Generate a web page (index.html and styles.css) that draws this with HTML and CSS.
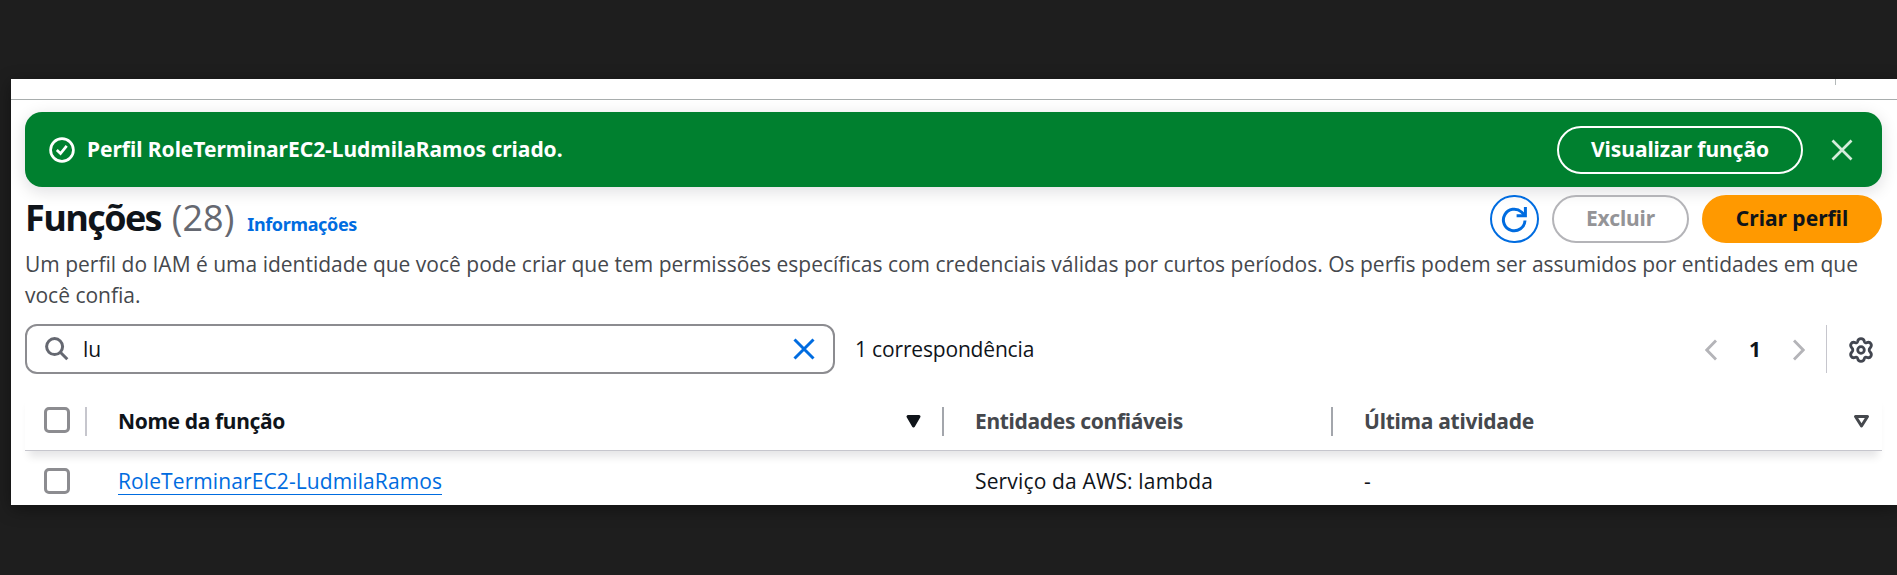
FILE: index.html
```
<!DOCTYPE html>
<html lang="pt-BR">
<head>
<meta charset="utf-8">
<title>Funções | IAM</title>
<link rel="stylesheet" href="styles.css">
</head>
<body>
<main class="panel">
  <div class="topbar"><span class="topbar-tick"></span></div>

  <section class="flash">
    <svg class="flash-icon" viewBox="0 0 26 26"><circle cx="13" cy="13" r="11.4"/><path d="M7.8 13l3.700 3.500 6.200-7.700"/></svg>
    <p class="flash-text">Perfil RoleTerminarEC2-LudmilaRamos criado.</p>
    <button class="btn btn-flash">Visualizar função</button>
    <svg class="flash-close" viewBox="0 0 22 22"><path d="M1.5 1.5l19 19M20.5 1.5l-19 19"/></svg>
  </section>

  <header class="header">
    <h1 class="title">Funções</h1>
    <span class="count">(28)</span>
    <a class="info">Informações</a>
    <div class="actions">
      <button class="btn btn-refresh"><svg viewBox="0 0 27 27"><path d="M24 14.500A10.800 10.800 0 1 1 20.500 6L23.500 9"/><path d="M24.400 1v8.800h-8.800"/></svg></button>
      <button class="btn btn-disabled">Excluir</button>
      <button class="btn btn-primary">Criar perfil</button>
    </div>
  </header>

  <p class="description">Um perfil do IAM é uma identidade que você pode criar que tem permissões específicas com credenciais válidas por curtos períodos. Os perfis podem ser assumidos por entidades em que<br>você confia.</p>

  <div class="tools">
    <div class="search">
      <svg class="search-icon" viewBox="0 0 24 24"><circle cx="9.600" cy="9.600" r="8"/><path d="M15.300 15.300l7 7"/></svg>
      <span class="search-value">lu</span>
      <svg class="search-clear" viewBox="0 0 22 22"><path d="M1.5 1.5l19 19M20.5 1.5l-19 19"/></svg>
    </div>
    <span class="matches">1 correspondência</span>
    <div class="pager">
      <svg class="chevron" viewBox="0 0 12 22"><path d="M11 1.5L1.800 11l9.200 9.500"/></svg>
      <span class="page">1</span>
      <svg class="chevron" viewBox="0 0 12 22"><path d="M1 1.5l9.200 9.500L1 20.500"/></svg>
    </div>
    <div class="settings">
      <svg class="gear" viewBox="0 0 26 26"><path d="M9.600 4.600C10 2.600 11.200 1.700 13 1.700S16 2.600 16.400 4.600C16.700 5.800 17.600 6 18.700 5.600C20.500 4.900 22 5.200 22.900 6.800S23.400 9.800 22 11.100C20.900 12.100 20.900 13.900 22 14.900C23.400 16.200 23.800 17.600 22.900 19.200S20.500 21.100 18.700 20.400C17.600 20 16.700 20.200 16.400 21.400C16 23.400 14.800 24.300 13 24.300S10 23.400 9.600 21.400C9.300 20.200 8.400 20 7.300 20.400C5.500 21.100 4 20.800 3.100 19.200S2.600 16.200 4 14.900C5.100 13.900 5.100 12.100 4 11.100C2.600 9.800 2.200 8.400 3.100 6.800S5.500 4.900 7.300 5.600C8.400 6 9.300 5.800 9.600 4.600Z"/><circle cx="13" cy="13" r="3.300"/></svg>
    </div>
  </div>

  <div class="row row-head">
    <div class="cell-check"><span class="checkbox"></span></div>
    <div class="cell cell-sorted">Nome da função<svg class="sort sort-active" viewBox="0 0 17 15"><path d="M3 2.500h11L8.500 12Z"/></svg></div>
    <div class="cell cell-entities">Entidades confiáveis</div>
    <div class="cell cell-activity">Última atividade<svg class="sort" viewBox="0 0 17 15"><path d="M2.500 2.500h12L8.500 12Z"/></svg></div>
  </div>
  <div class="row row-body">
    <div class="cell-check"><span class="checkbox"></span></div>
    <div class="cell"><a class="role-link">RoleTerminarEC2-LudmilaRamos</a></div>
    <div class="cell cell-service">Serviço da AWS: lambda</div>
    <div class="cell">-</div>
  </div>
</main>
</body>
</html>
```
FILE: styles.css
```
* { box-sizing: border-box; }
body {
  margin: 0;
  height: 575px;
  padding: 79px 0 0 11px;
  overflow: hidden;
  background: #1e1e1e;
  font: 400 21px/31px "Open Sans", "Noto Sans", sans-serif;
  color: #0f141a;
}
p, h1 { margin: 0; }
svg { display: block; flex: none; fill: none; stroke: currentColor; }

.panel {
  height: 426px;
  overflow: hidden;
  padding-right: 15px;
  background: #fff;
  box-shadow: 0 4px 16px rgba(0, 0, 0, .4);
  white-space: nowrap;
}
.topbar {
  display: flex;
  justify-content: flex-end;
  height: 21px;
  margin-right: -15px;
  padding-right: 61px;
  border-bottom: 1px solid #a8adad;
}
.topbar-tick { width: 1px; height: 6px; background: #b4b9b9; }

.btn {
  height: 48px;
  padding: 0 0 2px;
  border: 2px solid;
  border-radius: 24px;
  background: none;
  font: 700 21px/40px "Noto Sans", "Open Sans", sans-serif;
}

.flash {
  display: flex;
  align-items: center;
  height: 75px;
  margin: 12px 0 0 14px;
  padding: 0 29px 0 24px;
  border-radius: 17px;
  background: #00802f;
  color: #fff;
  box-shadow: 0 4px 16px 1px rgba(0, 7, 22, .12);
}
.flash-icon { width: 26px; height: 26px; stroke-width: 2.7; }
.flash-text { flex: 1; margin-left: 12px; font-family: "Noto Sans", "Open Sans", sans-serif; font-weight: 700; letter-spacing: -.04px; }
.btn-flash { width: 246px; color: #fff; letter-spacing: -.06px; }
.flash-close { width: 22px; height: 22px; margin-left: 28px; color: #d5ecdb; stroke-width: 2.7; }

.header { display: flex; align-items: baseline; height: 56px; padding: 7px 0 0 14px; }
.title { font-weight: 700; font-size: 36px; line-height: 48px; letter-spacing: -1.6px; }
.count { margin-left: 11px; font-size: 36px; line-height: 48px; color: #656871; }
.info { margin-left: 13px; font: 700 18px/31px "Noto Sans", "Open Sans", sans-serif; letter-spacing: -.35px; color: #006ce0; }
.actions { display: flex; align-self: flex-start; gap: 13px; margin: 1px 0 0 auto; }
.btn-refresh { display: flex; align-items: center; justify-content: center; width: 49px; padding: 0; color: #006ce0; }
.btn-refresh svg { width: 27px; height: 27px; stroke-width: 3; }
.btn-disabled { width: 137px; border-color: #b4b4b8; color: #949497; letter-spacing: -.1px; }
.btn-primary { width: 180px; border-color: #ff9900; background: #ff9900; color: #0f141a; }

.description { margin: 6px 0 0 14px; color: #45484d; }

.tools { display: flex; align-items: center; height: 50px; margin: 13px 0 0 14px; }
.search {
  display: flex;
  align-items: center;
  width: 810px;
  height: 50px;
  padding: 0 18px 0 18px;
  border: 2px solid #8c8c90;
  border-radius: 12px;
}
.search-icon { width: 24px; height: 24px; color: #656871; stroke-width: 3; }
.search-value { flex: 1; margin-left: 14px; }
.search-clear { width: 22px; height: 22px; color: #006ce0; stroke-width: 3; }
.matches { margin-left: 20px; letter-spacing: -.17px; }
.pager { display: flex; align-items: center; margin-left: auto; color: #b4b4b8; }
.chevron { width: 12px; height: 22px; margin-top: 2px; stroke-width: 2.8; }
.page { width: 76px; text-align: center; font-size: 21px; font-weight: 700; color: #0f141a; }
.settings {
  display: flex;
  align-items: center;
  height: 48px;
  margin-left: 21px;
  padding: 2px 8px 0 21px;
  border-left: 1px solid #c6c6cd;
}
.gear { width: 26px; height: 26px; color: #424650; stroke-width: 2.8; }

.row { display: grid; grid-template-columns: 62px 857px 389px 1fr; align-items: center; margin-left: 14px; }
.row-head {
  height: 59px;
  margin-top: 18px;
  border-bottom: 1px solid #c6c6cd;
  box-shadow: 0 10px 8px -4px rgba(0, 7, 22, .1);
  font: 700 21px/31px "Noto Sans", "Open Sans", sans-serif;
  color: #45484d;
}
.row-body { height: 60px; }
.cell-check { display: flex; align-items: center; height: 29px; padding-left: 19px; border-right: 2px solid transparent; }
.row-head .cell-check { border-right-color: #c6c6cd; }
.row-head .checkbox { margin-top: -2px; }
.checkbox { width: 26px; height: 26px; border: 3px solid #8c8c90; border-radius: 5px; }
.cell { display: flex; align-items: center; justify-content: space-between; height: 29px; padding-left: 31px; }
.row-head .cell-sorted, .row-head .cell-entities { border-right: 2px solid #a3a6ac; }
.cell-sorted { padding-right: 20px; color: #0f141a; letter-spacing: -.36px; }
.cell-entities { letter-spacing: -.32px; }
.cell-activity { padding-right: 12px; letter-spacing: -.25px; }
.cell-service { letter-spacing: .15px; }
.sort { width: 17px; height: 15px; stroke-width: 3; stroke-linejoin: round; }
.sort-active { fill: currentColor; }
.role-link { height: 28px; line-height: 29px; border-bottom: 1px solid #006ce0; color: #006ce0; letter-spacing: .1px; }
```
